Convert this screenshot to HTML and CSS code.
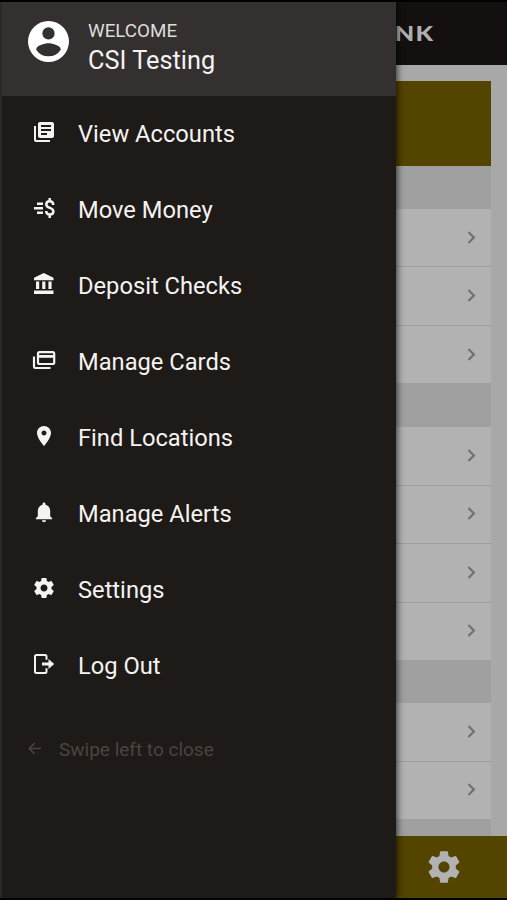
FILE: index.html
```html
<!DOCTYPE html>
<html lang="en">
<head>
    <meta charset="UTF-8">
    <meta name="viewport" content="width=device-width, initial-scale=1.0">
    <title>Mobile Banking</title>
    <link rel="stylesheet" href="styles.css">
</head>
<body>
    <svg class="defs">
        <symbol id="chevron" viewBox="0 0 8 12"><path d="M1.200 1l5 5-5 5" fill="none" stroke="currentColor" stroke-width="2"/></symbol>
        <symbol id="gear" viewBox="0 0 24 24"><path fill="currentColor" d="M19.43 12.98c.04-.32.07-.64.07-.98s-.03-.66-.07-.98l2.11-1.65c.19-.15.24-.42.12-.64l-2-3.46c-.12-.22-.39-.3-.61-.22l-2.49 1c-.52-.4-1.08-.73-1.69-.98l-.38-2.65C14.46 2.18 14.25 2 14 2h-4c-.25 0-.46.18-.49.42l-.38 2.65c-.61.25-1.17.59-1.69.98l-2.49-1c-.23-.09-.49 0-.61.22l-2 3.46c-.13.22-.07.49.12.64l2.11 1.65c-.04.32-.07.65-.07.98s.03.66.07.98l-2.11 1.65c-.19.15-.24.42-.12.64l2 3.46c.12.22.39.3.61.22l2.49-1c.52.4 1.08.73 1.69.98l.38 2.65c.03.24.24.42.49.42h4c.25 0 .46-.18.49-.42l.38-2.65c.61-.25 1.17-.59 1.69-.98l2.49 1c.23.09.49 0 .61-.22l2-3.46c.12-.22.07-.49-.12-.64l-2.11-1.65zM12 15.500c-1.930 0-3.500-1.570-3.500-3.500s1.570-3.500 3.500-3.500 3.500 1.570 3.500 3.500-1.570 3.500-3.500 3.500z"/></symbol>
    </svg>

    <div class="app">
        <header class="topbar"><span class="brand">BANK</span></header>
        <main class="content">
            <div class="card">
                <div class="banner"></div>
                <div class="section"></div>
                <div class="row"><svg><use href="#chevron"/></svg></div>
                <div class="row"><svg><use href="#chevron"/></svg></div>
                <div class="row last"><svg><use href="#chevron"/></svg></div>
                <div class="section tall"></div>
                <div class="row"><svg><use href="#chevron"/></svg></div>
                <div class="row"><svg><use href="#chevron"/></svg></div>
                <div class="row"><svg><use href="#chevron"/></svg></div>
                <div class="row last"><svg><use href="#chevron"/></svg></div>
                <div class="section"></div>
                <div class="row"><svg><use href="#chevron"/></svg></div>
                <div class="row last"><svg><use href="#chevron"/></svg></div>
                <div class="section"></div>
            </div>
        </main>
        <footer class="tabbar"><svg class="tab-gear"><use href="#gear"/></svg></footer>
    </div>

    <aside class="drawer">
        <div class="profile">
            <svg class="avatar" viewBox="2 2 20 20"><path fill="currentColor" fill-rule="evenodd" d="M12 2a10 10 0 1 0 0 20 10 10 0 0 0 0-20zm0 3a3 3 0 1 1 0 6 3 3 0 0 1 0-6zm0 14.200a7.200 7.200 0 0 1-6-3.220c.03-1.990 4-3.080 6-3.080s5.970 1.090 6 3.080a7.200 7.200 0 0 1-6 3.220z"/></svg>
            <div class="who">
                <div class="welcome">WELCOME</div>
                <div class="name">CSI Testing</div>
            </div>
        </div>
        <nav class="menu">
            <a class="item">
                <svg viewBox="0 0 24 24"><path fill="currentColor" d="M4 6H2v14c0 1.100.9 2 2 2h14v-2H4V6zm16-4H8c-1.100 0-2 .9-2 2v12c0 1.100.9 2 2 2h12c1.100 0 2-.9 2-2V4c0-1.100-.9-2-2-2zm-1 9H9V9h10v2zm-4 4H9v-2h6v2zm4-8H9V5h10v2z"/></svg>
                <span>View Accounts</span>
            </a>
            <a class="item">
                <svg viewBox="0 0 24 24" fill="none" stroke="currentColor" stroke-width="2.500"><path d="M5 7.800h6M2 12.300h9M5 16.800h6"/><path d="M21.200 9c0-2.400-1.500-3.700-3.500-3.700s-3.400 1.200-3.400 3.100c0 4.300 7.100 2.600 7.100 6.900 0 2-1.500 3.300-3.500 3.300-2.300 0-3.700-1.300-3.800-3.600M17.700 2v3.300M17.700 18.600v3.400"/></svg>
                <span>Move Money</span>
            </a>
            <a class="item">
                <svg viewBox="0 0 24 24"><path fill="currentColor" d="M4 9.500v7.500h3.200V9.500H4zm6.200 0v7.500h3.200V9.500h-3.200zM2 22h19.500v-3.500H2v3.500zM16.400 9.500v7.500h3.200V9.500h-3.200zM11.800 1L2 5.800V8.200h19.500V5.800L11.800 1z"/></svg>
                <span>Deposit Checks</span>
            </a>
            <a class="item">
                <svg viewBox="0 0 24 24" fill="none" stroke="currentColor" stroke-width="2.200"><rect x="6" y="4.200" width="16.200" height="11.800" rx="1.500"/><path d="M6 8.400h16.200" stroke-width="2.800"/><path d="M2 8.500v10.200c0 .8.500 1.300 1.300 1.300H18.500"/></svg>
                <span>Manage Cards</span>
            </a>
            <a class="item">
                <svg viewBox="0 0 24 24"><path fill="currentColor" d="M12 2C8.130 2 5 5.130 5 9c0 5.250 7 13 7 13s7-7.750 7-13c0-3.870-3.130-7-7-7zm0 9.500c-1.380 0-2.500-1.120-2.500-2.500s1.120-2.500 2.500-2.500 2.500 1.120 2.500 2.500-1.120 2.500-2.500 2.500z"/></svg>
                <span>Find Locations</span>
            </a>
            <a class="item">
                <svg viewBox="0 0 24 24"><path fill="currentColor" d="M12 22.200c1.100 0 2-.9 2-2h-4c0 1.100.9 2 2 2zm6.200-6v-5.200c0-3.200-1.840-5.640-4.700-6.320V4c0-.83-.67-1.500-1.500-1.500s-1.500.67-1.500 1.500v.68C7.630 5.360 5.800 7.920 5.800 11v5.200L3.800 18.200v1h16.400v-1l-2-2z"/></svg>
                <span>Manage Alerts</span>
            </a>
            <a class="item">
                <svg><use href="#gear"/></svg>
                <span>Settings</span>
            </a>
            <a class="item">
                <svg viewBox="0 0 24 24" fill="none" stroke="currentColor" stroke-width="2"><path d="M14.500 7.800V4.500c0-.9-.6-1.500-1.500-1.500H4.500C3.600 3 3 3.600 3 4.500v15c0 .9.6 1.500 1.500 1.500H13c.9 0 1.500-.6 1.500-1.500v-3.300"/><path d="M10 12h8" stroke-width="3"/><path fill="currentColor" stroke="none" d="M16.500 7l5.700 5-5.700 5z"/></svg>
                <span>Log Out</span>
            </a>
        </nav>
        <div class="hint">
            <svg viewBox="0 0 14 14" fill="none" stroke="currentColor" stroke-width="1.700"><path d="M14 7H1.500M7.200 1L1.300 7l5.900 6"/></svg>
            <span>Swipe left to close</span>
        </div>
    </aside>
</body>
</html>
```
FILE: styles.css
```css
* {
    box-sizing: border-box;
}
body {
    margin: 0;
    height: 900px;
    overflow: hidden;
    background-color: #000;
    font-family: Roboto, "Liberation Sans", sans-serif;
    position: relative;
}
svg {
    display: block;
    flex-shrink: 0;
}
.defs {
    position: absolute;
    width: 0;
    height: 0;
}

/* screen behind the drawer */
.app {
    height: 900px;
    padding: 2px 0;
    display: flex;
    flex-direction: column;
}
.topbar {
    height: 63px;
    flex-shrink: 0;
    padding: 0 74px 2px 0;
    display: flex;
    align-items: center;
    justify-content: flex-end;
    background-color: #13100f;
}
.brand {
    color: #afafaf;
    font-family: Lato, sans-serif;
    font-size: 21px;
    font-weight: 900;
    letter-spacing: 1px;
    margin-right: -1px;
    transform: scaleX(1.2);
    transform-origin: right center;
}
.content {
    flex: 1;
    min-height: 0;
    overflow: hidden;
    padding: 16px 16px 0;
    background-color: #a8a8a8;
}
.banner {
    height: 85px;
    background-color: #534400;
}
.section {
    height: 43px;
    background-color: #a0a0a0;
}
.section.tall {
    height: 44px;
}
.row {
    height: 58.4px;
    padding: 0 15px 1px 0;
    display: flex;
    align-items: center;
    justify-content: flex-end;
    background-color: #b2b2b2;
    border-bottom: 1px solid #9d9d9d;
    color: #707070;
}
.row.last {
    height: 57.6px;
    border-bottom: none;
}
.row svg {
    width: 9px;
    height: 13px;
}
.tabbar {
    height: 62px;
    flex-shrink: 0;
    padding-right: 44px;
    display: flex;
    align-items: center;
    justify-content: flex-end;
    background-color: #534400;
    color: #b2b2b2;
}
.tab-gear {
    width: 38px;
    height: 38px;
}

/* drawer */
.drawer {
    position: absolute;
    top: 2px;
    left: 0;
    width: 396px;
    height: 896px;
    background-color: #1e1a17;
    border-left: 2px solid #2b2826;
    box-shadow: 1px 0 7px rgba(0, 0, 0, 0.75);
    color: #f4f3f2;
}
.profile {
    height: 94px;
    padding: 19px 0 0 26px;
    display: flex;
    gap: 20px;
    background-color: #343030;
}
.avatar {
    width: 41px;
    height: 41px;
    margin-right: -1px;
    color: #fff;
}
.welcome {
    font-size: 18.8px;
    line-height: 21px;
    color: #dedcdb;
}
.name {
    font-size: 25.3px;
    line-height: 38px;
}
.item {
    height: 75.9px;
    padding-left: 30px;
    display: flex;
    align-items: center;
    gap: 22px;
    font-size: 23.7px;
}
.item:first-child {
    height: 76.3px;
}
.item svg {
    width: 24px;
    height: 24px;
    margin-top: -4px;
}
.hint {
    margin-top: 35px;
    padding-left: 26px;
    display: flex;
    align-items: center;
    gap: 18px;
    font-size: 19px;
    line-height: 22px;
    color: #4b4441;
}
.hint svg {
    width: 13px;
    height: 13px;
    margin-top: -3px;
}
```
